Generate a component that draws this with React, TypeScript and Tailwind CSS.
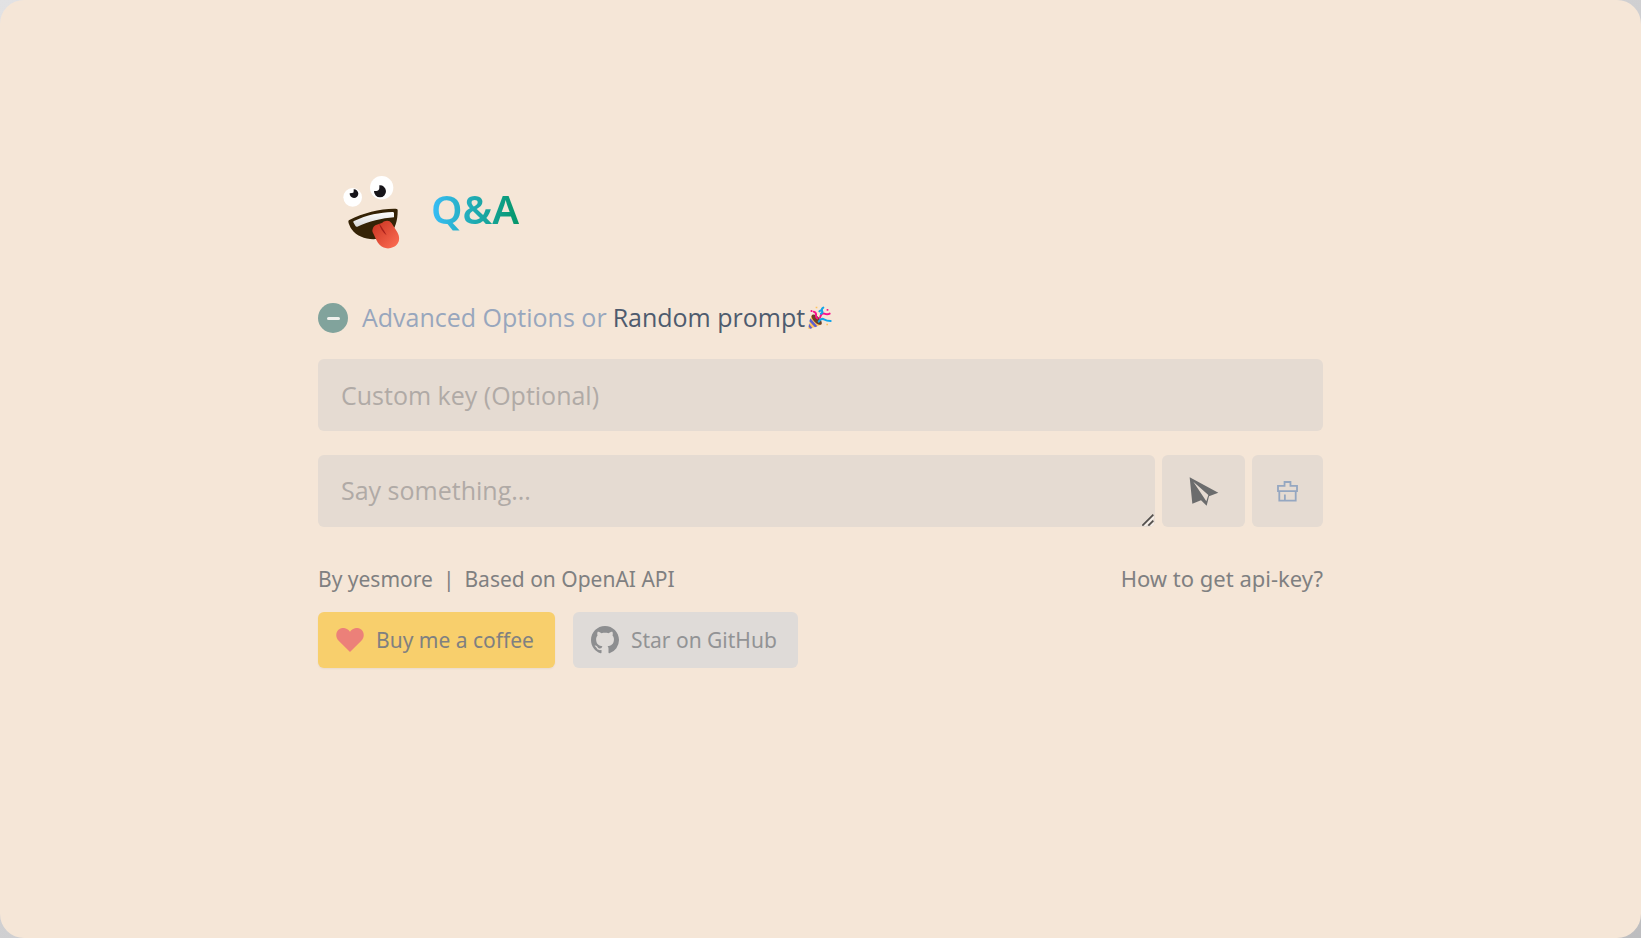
import React from "react";

function ZanyFace() {
  return (
    <svg viewBox="90 40 189 240" className="h-20 w-[63px]" aria-hidden="true">
      <defs>
        <linearGradient id="tongue" x1="0" y1="0" x2="1" y2="1">
          <stop offset="0" stopColor="#c8321f" />
          <stop offset="1" stopColor="#ff6f55" />
        </linearGradient>
        <linearGradient id="teeth" x1="0" y1="0" x2="0" y2="1">
          <stop offset="0" stopColor="#ffffff" />
          <stop offset="1" stopColor="#d9d9d9" />
        </linearGradient>
      </defs>
      <circle cx="128" cy="113" r="28" fill="#fff" />
      <circle cx="215" cy="84" r="35" fill="#fff" />
      <path d="M131 89a13 13 0 1 1-12 12l7-1a5 5 0 0 0 5-6z" fill="#17151a" />
      <path d="M208 77a18 18 0 1 1-16 17h6a9 9 0 0 0 10-9z" fill="#17151a" />
      <path d="M118 181C160 159 213 146 257 147q7 0 6 7c0 28-7 55-25 70-30 24-92 18-113-15-5-8-9-17-10-23q0-4 3-5z" fill="#352306" />
      <path d="M132 184C170 166 210 158 248 157q4 0 4 4v12c-36 2-75 13-110 28q-4 1-6-3l-6-10q-1-3 2-4z" fill="url(#teeth)" />
      <path d="M188 208c3-15 20-14 29-19 8-7 21-9 28 2l17 27c16 29-6 50-32 48-26-3-31-28-42-48q-2-5 0-10z" fill="url(#tongue)" />
      <path d="M207 191q10 13 23 36-17-12-23-36z" fill="#a81f1b" />
    </svg>
  );
}

function PartyPopper() {
  return (
    <svg viewBox="0 0 72 72" className="h-6 w-6" aria-hidden="true">
      <path d="M10 29L39 56 4 69q-4 0-3-4z" fill="#ffc35c" />
      <path d="M7 37l21 24-7 3L4 46zM3 53l10 13-6 2-5-6z" fill="#5b5fd0" />
      <ellipse cx="26" cy="41" rx="9" ry="20" transform="rotate(-45 26 41)" fill="#6b3f26" />
      <path d="M17 17q9 3 7 12 0 6 4 8M36 35q4-16 13-12t16 0" fill="none" stroke="#f8128c" strokeWidth="6" strokeLinecap="round" />
      <path d="M34 16q4-5 8-1t-3 8M42 14q-2-6 4-9M32 47q8-12 16-7t20 5" fill="none" stroke="#12a4e8" strokeWidth="6" strokeLinecap="round" />
      <path d="M8 12h5v6H8zM56 9h5v5h-5z" fill="#f8128c" />
      <path d="M23 2h5v5h-5zM55 53h5v5h-5z" fill="#ffc35c" />
    </svg>
  );
}

function SendIcon() {
  return (
    <svg viewBox="0 0 90 90" className="h-[30px] w-[30px]" fill="#6b6c6d" aria-hidden="true">
      <path fillRule="evenodd" d="M2 4L88 50 60 61 53 89 36 73 10 83zM13 17L52 76l6-19z" />
    </svg>
  );
}

function BrushIcon() {
  return (
    <svg viewBox="0 0 64 64" className="h-[21px] w-[21px]" fill="none" stroke="#95a7c1" strokeWidth="5.5" aria-hidden="true">
      <path d="M3 31V15h20V3h18v12h20v16zM7 31v29h50V31M24 60V41" />
    </svg>
  );
}

function GitHubIcon() {
  return (
    <svg viewBox="0 0 16 16" className="h-7 w-7" fill="#8d8e90" aria-hidden="true">
      <path d="M8 0C3.58 0 0 3.58 0 8c0 3.54 2.29 6.53 5.47 7.59.4.07.55-.17.55-.38 0-.19-.01-.82-.01-1.49-2.01.37-2.53-.49-2.69-.94-.09-.23-.48-.94-.82-1.13-.28-.15-.68-.52-.01-.53.63-.01 1.08.58 1.23.82.72 1.21 1.87.87 2.33.66.07-.52.28-.87.51-1.07-1.78-.2-3.64-.89-3.64-3.95 0-.87.31-1.59.82-2.15-.08-.2-.36-1.02.08-2.12 0 0 .67-.21 2.2.82.64-.18 1.32-.27 2-.27s1.36.09 2 .27c1.53-1.04 2.2-.82 2.2-.82.44 1.1.16 1.92.08 2.12.51.56.82 1.27.82 2.15 0 3.07-1.87 3.75-3.65 3.95.29.25.54.73.54 1.48 0 1.07-.01 1.93-.01 2.2 0 .21.15.46.55.38A8.01 8.01 0 0 0 16 8c0-4.42-3.58-8-8-8z" />
    </svg>
  );
}

function HeartIcon() {
  return (
    <svg viewBox="0 0 84 72" className="h-6 w-7" fill="#ec8079" aria-hidden="true">
      <path d="M42 72L8 38C-4 25 0 8 12 2c11-5 23-1 30 9C49 1 61-3 72 2c12 6 16 23 4 36z" />
    </svg>
  );
}

export default function App() {
  return (
    <div className="min-h-screen bg-linear-to-br from-[#e2e2e4] to-[#bdbdbf] font-['Open_Sans','Noto_Sans',sans-serif]">
      <main className="min-h-screen rounded-[24px] bg-[#f5e6d7] px-6 pt-[173px]">
        <div className="mx-auto w-full max-w-[1005px]">
          <header className="flex items-start gap-7 pl-[22px]">
            <ZanyFace />
            <h1 className="mt-3 bg-linear-to-r from-[#38bdf8] to-[#059669] bg-clip-text font-['Noto_Sans',sans-serif] text-[40px] leading-12 font-semibold text-transparent">Q&amp;A</h1>
          </header>

          <div className="mt-[45px] flex h-10 items-center text-[25px]">
            <button type="button" aria-label="Collapse options" className="mr-[14px] flex h-[30px] w-[30px] items-center justify-center rounded-full bg-[#81a39c]">
              <span className="h-[3px] w-[13px] rounded-xs bg-[#f0f1ed]" />
            </button>
            <span className="text-[#98a6bd]">Advanced Options or</span>
            <button type="button" className="ml-[6px] flex items-center gap-[3px] text-[#4e5b6e]">
              Random prompt
              <PartyPopper />
            </button>
          </div>

          <form className="mt-[21px]" onSubmit={(e) => e.preventDefault()}>
            <input type="text" aria-label="Custom key" placeholder="Custom key (Optional)" className="block h-[72px] w-full rounded-md bg-[#e5dbd2] px-[23px] text-[25px] text-[#6b6c6d] outline-none placeholder:text-[#b0aaa6]" />
            <div className="mt-6 flex gap-[7px]">
              <div className="relative flex-1">
                <textarea aria-label="Message" rows={1} placeholder="Say something..." className="block h-[72px] w-full resize-none rounded-md bg-[#e5dbd2] px-[23px] py-[17px] text-[25px] leading-9 text-[#6b6c6d] outline-none placeholder:text-[#b0aaa6]" />
                <svg viewBox="0 0 36 36" className="pointer-events-none absolute right-px bottom-px h-3 w-3" fill="none" strokeWidth="4" aria-hidden="true">
                  <path d="M9 36L36 9M27 36l9-9" stroke="#f6f1ed" />
                  <path d="M1 35L34 2M19 35l15-15" stroke="#514e4c" strokeWidth="5" />
                </svg>
              </div>
              <button type="submit" aria-label="Send" className="flex w-[83px] items-center justify-center rounded-md bg-[#e5dbd2]">
                <SendIcon />
              </button>
              <button type="button" aria-label="Clear" className="flex w-[71px] items-center justify-center rounded-md bg-[#e5dbd2]">
                <BrushIcon />
              </button>
            </div>
          </form>

          <footer className="mt-[35px] font-['Noto_Sans','Open_Sans',sans-serif] text-[21px] leading-8 text-[#7f8081]">
            <div className="flex items-baseline justify-between">
              <p className="flex gap-[10px]">
                <a href="#author">By yesmore</a>
                <span>|</span>
                <a href="#openai">Based on OpenAI API</a>
              </p>
              <a href="#api-key" className="text-[22px]">How to get api-key?</a>
            </div>
            <div className="mt-[17px] flex gap-[18px]">
              <a href="#coffee" className="flex h-14 items-center gap-3 rounded-md bg-[#f8cf6c] pr-[21px] pl-[18px] shadow-xs">
                <HeartIcon />
                Buy me a coffee
              </a>
              <a href="#github" className="flex h-14 items-center gap-3 rounded-md bg-[#dfdbd8] pr-[21px] pl-[18px] text-[#929395]">
                <GitHubIcon />
                Star on GitHub
              </a>
            </div>
          </footer>
        </div>
      </main>
    </div>
  );
}
